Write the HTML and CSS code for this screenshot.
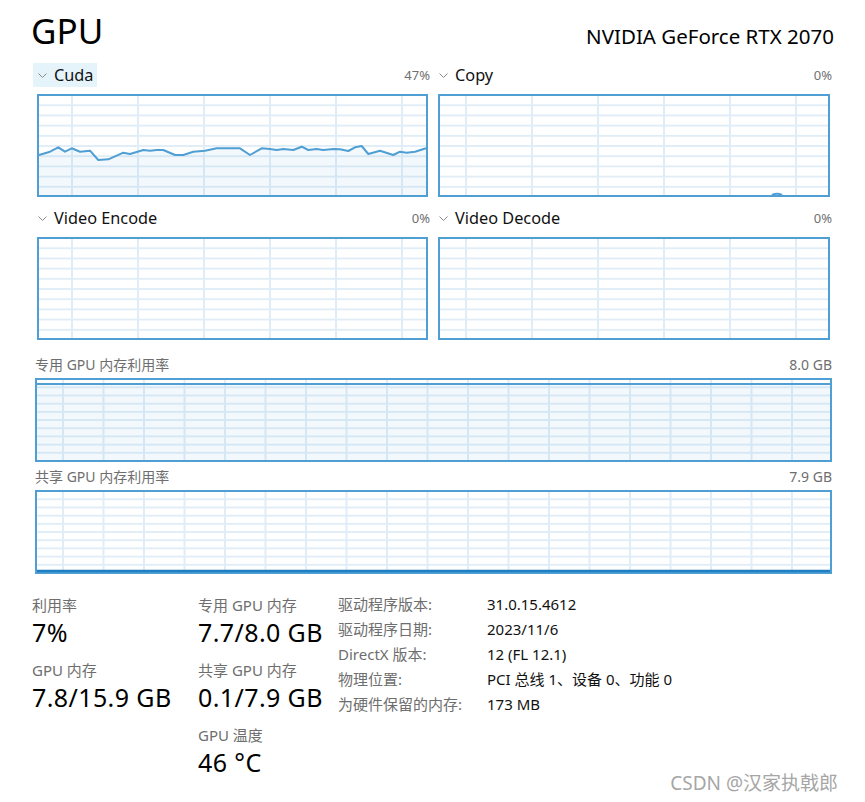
FILE: index.html
```html
<!DOCTYPE html>
<html lang="zh-CN">
<head>
<meta charset="utf-8">
<title>GPU</title>
<link rel="stylesheet" href="styles.css">
</head>
<body>
<div class="page">
  <header class="head">
    <h1 class="title">GPU</h1>
    <div class="model">NVIDIA GeForce RTX 2070</div>
  </header>

  <div class="engines">
    <section class="engine">
      <div class="engine-head">
        <span class="engine-name active"><svg class="chev" viewBox="0 0 9 5" width="9" height="5"><polyline points="0.5,0.5 4.5,4.5 8.5,0.5"/></svg>Cuda</span>
        <span class="pct">47%</span>
      </div>
      <div class="chart small grid-a">
        <svg class="plot" viewBox="0 0 387 99" preserveAspectRatio="none">
          <polygon class="area" points="0,59 11,55.7 19.3,51.3 26,55.7 32.7,52.3 41,55.7 51,54.7 59.3,64 69.3,63.3 84.3,56.7 91,58 104.3,54 111,54.7 117.7,54 124.3,54 136,59 144.3,59 154.3,55.7 166,54.7 177.7,52.3 201,52.3 211,59 222.7,52.3 231,53 237.7,54 244.3,53 254.3,54 262.7,50.7 269.3,54 277.7,53 284.3,54 294.3,53 301,53.3 309.3,55 316,51.3 322.7,50 329.3,58 341,54.7 354.3,59 361,55.7 367.7,56.7 376,55.7 387,52.3 387,99 0,99"/>
          <polyline class="line" points="0,59 11,55.7 19.3,51.3 26,55.7 32.7,52.3 41,55.7 51,54.7 59.3,64 69.3,63.3 84.3,56.7 91,58 104.3,54 111,54.7 117.7,54 124.3,54 136,59 144.3,59 154.3,55.7 166,54.7 177.7,52.3 201,52.3 211,59 222.7,52.3 231,53 237.7,54 244.3,53 254.3,54 262.7,50.7 269.3,54 277.7,53 284.3,54 294.3,53 301,53.3 309.3,55 316,51.3 322.7,50 329.3,58 341,54.7 354.3,59 361,55.7 367.7,56.7 376,55.7 387,52.3"/>
        </svg>
      </div>
    </section>

    <section class="engine">
      <div class="engine-head">
        <span class="engine-name"><svg class="chev" viewBox="0 0 9 5" width="9" height="5"><polyline points="0.5,0.5 4.5,4.5 8.5,0.5"/></svg>Copy</span>
        <span class="pct">0%</span>
      </div>
      <div class="chart small grid-b">
        <svg class="plot" viewBox="0 0 388 99" preserveAspectRatio="none">
          <path class="line" d="M332,99 Q337,96.5 342,99"/>
        </svg>
      </div>
    </section>

    <section class="engine">
      <div class="engine-head">
        <span class="engine-name"><svg class="chev" viewBox="0 0 9 5" width="9" height="5"><polyline points="0.5,0.5 4.5,4.5 8.5,0.5"/></svg>Video Encode</span>
        <span class="pct">0%</span>
      </div>
      <div class="chart small grid-a"></div>
    </section>

    <section class="engine">
      <div class="engine-head">
        <span class="engine-name"><svg class="chev" viewBox="0 0 9 5" width="9" height="5"><polyline points="0.5,0.5 4.5,4.5 8.5,0.5"/></svg>Video Decode</span>
        <span class="pct">0%</span>
      </div>
      <div class="chart small grid-b"></div>
    </section>
  </div>

  <section class="mem">
    <div class="mem-head"><span>专用 GPU 内存利用率</span><span>8.0 GB</span></div>
    <div class="chart wide">
      <svg class="plot" viewBox="0 0 793 80" preserveAspectRatio="none">
        <polygon class="area" points="0,4 793,4 793,80 0,80"/>
        <polyline class="line" points="0,4 793,4"/>
      </svg>
    </div>
  </section>

  <section class="mem mem-shared">
    <div class="mem-head"><span>共享 GPU 内存利用率</span><span>7.9 GB</span></div>
    <div class="chart wide">
      <svg class="plot" viewBox="0 0 793 80" preserveAspectRatio="none">
        <polyline class="line dark" points="0,79 793,79"/>
      </svg>
    </div>
  </section>

  <div class="stats">
    <div class="stat-col col1">
      <div class="stat">
        <div class="stat-label">利用率</div>
        <div class="stat-value">7%</div>
      </div>
      <div class="stat">
        <div class="stat-label">GPU 内存</div>
        <div class="stat-value">7.8/15.9 GB</div>
      </div>
    </div>
    <div class="stat-col col2">
      <div class="stat">
        <div class="stat-label">专用 GPU 内存</div>
        <div class="stat-value">7.7/8.0 GB</div>
      </div>
      <div class="stat">
        <div class="stat-label">共享 GPU 内存</div>
        <div class="stat-value">0.1/7.9 GB</div>
      </div>
      <div class="stat">
        <div class="stat-label">GPU 温度</div>
        <div class="stat-value">46 °C</div>
      </div>
    </div>
    <dl class="info">
      <dt>驱动程序版本:</dt><dd>31.0.15.4612</dd>
      <dt>驱动程序日期:</dt><dd>2023/11/6</dd>
      <dt>DirectX 版本:</dt><dd>12 (FL 12.1)</dd>
      <dt>物理位置:</dt><dd>PCI 总线 1、设备 0、功能 0</dd>
      <dt>为硬件保留的内存:</dt><dd>173 MB</dd>
    </dl>
  </div>

  <div class="watermark">CSDN @汉家执戟郎</div>
</div>
</body>
</html>
```

FILE: styles.css
```css
html, body {
  margin: 0;
  padding: 0;
  background: #ffffff;
}

body {
  font-family: "Noto Sans", "Noto Sans CJK SC", sans-serif;
  color: #000000;
}

.page {
  position: relative;
  width: 865px;
  height: 802px;
  box-sizing: border-box;
  padding: 0 33px 0 35px;
  overflow: hidden;
}

/* header */
.head {
  display: flex;
  justify-content: space-between;
  align-items: baseline;
  padding-top: 11px;
  height: 63px;
  box-sizing: border-box;
}

.title {
  margin: 0 0 0 -4px;
  font-size: 35px;
  line-height: 40px;
  font-weight: 400;
}

.model {
  font-size: 20.5px;
  margin-right: -2px;
}

/* engines */
.engines {
  display: grid;
  grid-template-columns: 391px 392px;
  column-gap: 10px;
  row-gap: 9px;
  padding: 0 2px;
}

.engine-head {
  display: flex;
  justify-content: space-between;
  align-items: center;
  height: 24px;
  margin-bottom: 7px;
}

.engine-name {
  display: inline-flex;
  align-items: center;
  gap: 7px;
  height: 24px;
  margin-left: -4px;
  padding: 0 3px 0 5px;
  font-size: 16.3px;
  color: #111111;
}

.engine-name.active {
  background: #e5f3fb;
}

.chev {
  display: block;
  fill: none;
  stroke: #8a8a8a;
  stroke-width: 1;
}

.pct {
  font-size: 13px;
  color: #707070;
  margin-right: -2px;
}

/* charts */
.chart {
  box-sizing: border-box;
  border: 2px solid #4f9fd4;
  background-color: #ffffff;
}

.chart.small {
  height: 103px;
  background-image:
    linear-gradient(to right, #e0edf7 0 2px, transparent 2px),
    linear-gradient(to bottom, transparent 8.2px, #e0edf7 8.2px);
  background-size: 66px 100%, 100% 10.2px;
  background-repeat: repeat-x, repeat-y;
}

.chart.small.grid-a {
  background-position: 32px 0, 0 0;
}

.chart.small.grid-b {
  background-position: 25px 0, 0 0;
}

.chart.wide {
  height: 84px;
  background-image:
    linear-gradient(to right, #e0edf7 0 2px, transparent 2px),
    linear-gradient(to bottom, transparent 6.2px, #e0edf7 6.2px);
  background-size: 40.5px 100%, 100% 8.2px;
  background-position: 25px 0, 0 0;
  background-repeat: repeat-x, repeat-y;
}

.plot {
  display: block;
  width: 100%;
  height: 100%;
  overflow: visible;
}

.plot .area {
  fill: rgba(90, 160, 215, 0.08);
  stroke: none;
}

.plot .line {
  fill: none;
  stroke: #4f9fd4;
  stroke-width: 2;
  vector-effect: non-scaling-stroke;
  stroke-linejoin: round;
}

.plot .line.dark {
  stroke: #1f7fc2;
  stroke-width: 2.5;
}

/* memory charts */
.mem {
  margin-top: 16px;
}

.mem-shared {
  margin-top: 6px;
}

.mem-head {
  display: flex;
  justify-content: space-between;
  font-size: 14px;
  line-height: 18px;
  color: #6e6e6e;
  margin-bottom: 4px;
}

/* stats */
.stats {
  display: flex;
  align-items: flex-start;
  margin-top: 21px;
  margin-left: -3px;
}

.stat-col.col1 {
  width: 166px;
}

.stat-col.col2 {
  width: 140px;
}

.stat {
  margin-bottom: 13px;
}

.stat-label {
  font-size: 15px;
  line-height: 20px;
  color: #6e6e6e;
}

.stat-value {
  font-size: 25px;
  line-height: 32px;
  letter-spacing: 0.4px;
  color: #000000;
  white-space: nowrap;
  position: relative;
  top: 1px;
}

.info {
  display: grid;
  grid-template-columns: 149px auto;
  margin: -3px 0 0 0;
  font-size: 15px;
  line-height: 25px;
}

.info dt {
  color: #6e6e6e;
}

.info dd {
  margin: 0;
  color: #111111;
}

.watermark {
  position: absolute;
  right: 27px;
  bottom: 8px;
  font-size: 19px;
  line-height: 22px;
  color: #a6a6a6;
}
```
